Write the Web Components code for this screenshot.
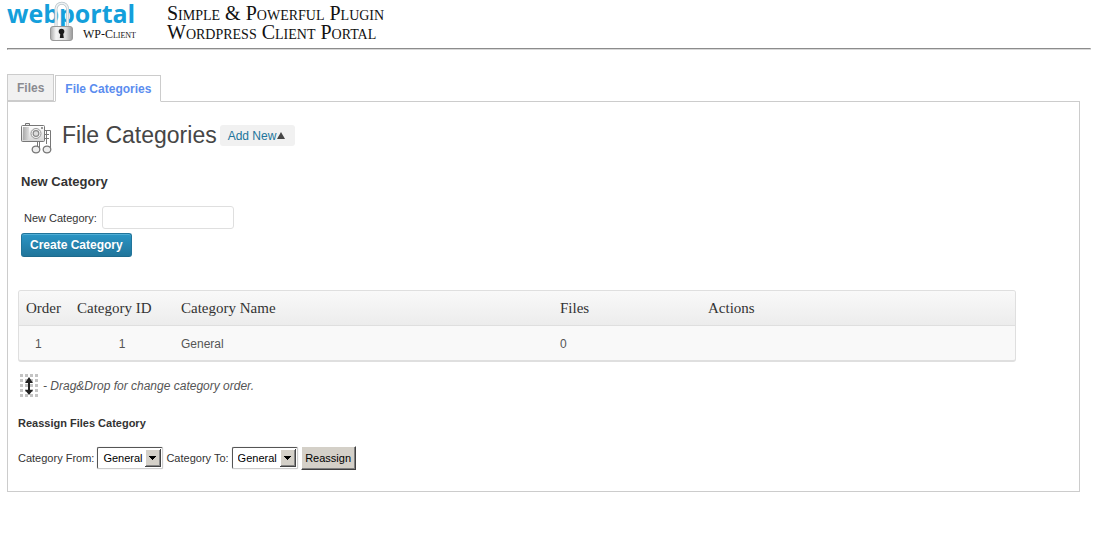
<!DOCTYPE html>
<html lang="en">
<head>
<meta charset="utf-8">
<title>File Categories</title>
<style>
  body { margin: 0; background: #fff; color: #333; font: 12px/18px "Liberation Sans", Arial, sans-serif; }
</style>
</head>
<body>
<portal-header></portal-header>
<portal-tabs></portal-tabs>
<portal-panel>
  <page-heading>File Categories</page-heading>
  <category-form></category-form>
  <category-table></category-table>
  <drag-hint>- Drag&amp;Drop for change category order.</drag-hint>
  <reassign-form></reassign-form>
</portal-panel>

<script>
const define = (name, html) => {
  const template = document.createElement('template');
  template.innerHTML = html;
  customElements.define(name, class extends HTMLElement {
    constructor() {
      super();
      this.attachShadow({ mode: 'open' }).append(template.content.cloneNode(true));
    }
  });
};

define('portal-header', `
<style>
  :host { display: block; padding: 0 3px 0 7px; font-family: "Liberation Serif", serif; color: #111; }
  .bar { display: flex; gap: 31px; height: 48px; box-sizing: border-box; }
  .logo { position: relative; flex: none; width: 129px; }
  .name { font: bold 25px/27px "Open Sans", sans-serif; color: #149fdb; }
  .sub { font-size: 12px; line-height: 14px; font-variant: small-caps; text-align: right; }
  svg { position: absolute; left: 42px; top: 1px; }
  .tag { padding-top: 4px; font-size: 20px; line-height: 19px; font-variant: small-caps; white-space: nowrap; }
  hr { margin: 0; border: 1px solid; border-color: #8c8c8c #d8d8d8 #d8d8d8 #8c8c8c; }
</style>
<div class="bar">
  <div class="logo">
    <div class="name">webportal</div>
    <div class="sub">WP-Client</div>
    <svg width="25" height="41" viewBox="0 0 25 41" aria-hidden="true">
      <defs><linearGradient id="m"><stop stop-color="#aaa"/><stop offset=".25" stop-color="#f4f4f4"/><stop offset=".7" stop-color="#ddd"/><stop offset="1" stop-color="#999"/></linearGradient></defs>
      <path d="M7 26V8a5.800 5.800 0 0 1 11.600 0v18" fill="none" stroke="#b9c4c9" stroke-width="3"/>
      <path d="M7 26V8a5.800 5.800 0 0 1 11.600 0v18" fill="none" stroke="#edf1f3" stroke-width="1.600"/>
      <rect x="1.500" y="25.500" width="22" height="14" rx="2.500" fill="url(#m)" stroke="#999"/>
      <circle cx="12.500" cy="30.500" r="2.800" fill="#1b1b1b"/><path d="M11.500 31h2.500l.8 6h-4z" fill="#1b1b1b"/>
    </svg>
  </div>
  <div class="tag">Simple &amp; Powerful Plugin<br>Wordpress Client Portal</div>
</div>
<hr>`);

define('portal-tabs', `
<style>
  :host { display: block; padding: 24px 14px 0 7px; }
  nav { display: flex; align-items: flex-end; gap: 1px; position: relative; margin-bottom: -1px; }
  a { box-sizing: border-box; height: 27px; padding: 0 9px; border: 1px solid #ccc; background: #f1f1f1; color: #8a8a90; font-weight: bold; line-height: 27px; text-decoration: none; margin-bottom: 1px; }
  a[aria-current] { background: #fff; border-bottom-color: #fff; color: #5b8def; margin-bottom: 0; }
</style>
<nav><a href="#files">Files</a><a href="#categories" aria-current="page">File Categories</a></nav>`);

define('portal-panel', `
<style>
  :host { display: block; margin: 0 14px 0 7px; border: 1px solid #ccc; padding: 15px 63px 21px 10px; }
</style>
<slot></slot>`);

define('page-heading', `
<style>
  :host { display: flex; align-items: center; gap: 3px; height: 36px; padding-left: 2px; }
  svg { flex: none; padding-top: 6px; margin-right: 6px; }
  h1 { margin: 0; font: 23px/36px "Liberation Sans", Arial, sans-serif; color: #464646; }
  a { display: flex; align-items: center; gap: 1px; padding: 1px 10px 0 8px; border-radius: 3px; background: #f1f1f1; color: #21759b; line-height: 20px; text-decoration: none; }
  i { border: 4px solid transparent; border-top: 0; border-bottom: 7px solid #464646; }
</style>
<svg width="33" height="32" viewBox="0 0 33 32" aria-hidden="true">
  <defs><linearGradient id="c" x2="0" y2="1"><stop stop-color="#fff"/><stop offset="1" stop-color="#d5d5d5"/></linearGradient><linearGradient id="g" x2="1" y2="0"><stop stop-color="#aaa"/><stop offset="1" stop-color="#ddd"/></linearGradient></defs>
  <path d="M5.500 3V1.500h4V3" fill="#eee" stroke="#777"/>
  <path d="M24 8.500h6.500V27M24 12.500h5M24 16.500h5M26.500 8.500V22" fill="none" stroke="#777"/>
  <rect x="1.500" y="3.500" width="23" height="16" rx="1" fill="url(#c)" stroke="#777"/>
  <rect x="3" y="5" width="6" height="13" fill="url(#g)"/>
  <circle cx="16" cy="11.500" r="5" fill="#f4f4f4" stroke="#999"/>
  <circle cx="16" cy="11.500" r="2.800" fill="#ddd" stroke="#888" stroke-width="1.200"/>
  <rect x="21" y="5" width="2" height="2" fill="#999"/>
  <path d="M19.500 20v7M17.500 20v4" stroke="#777" fill="none"/>
  <ellipse cx="16" cy="27.500" rx="3.800" ry="3.400" fill="#eee" stroke="#777" stroke-width="1.300"/>
  <ellipse cx="27" cy="27.500" rx="3.800" ry="3.400" fill="#eee" stroke="#777" stroke-width="1.300"/>
</svg>
<h1><slot></slot></h1>
<a href="#add">Add New<i></i></a>`);

define('category-form', `
<style>
  :host { display: block; padding: 19px 3px 33px; }
  h2 { margin: 0 0 14px; font-size: 13px; line-height: 20px; }
  div { display: flex; align-items: center; gap: 5px; padding-left: 3px; margin-bottom: 4px; font-size: 11px; }
  input { box-sizing: border-box; width: 132px; height: 23px; padding: 2px 4px; border: 1px solid #dfdfdf; border-radius: 3px; font: 12px "Liberation Sans", Arial, sans-serif; }
  button { display: block; height: 24px; padding: 0 8px; border: 1px solid #21759b; border-bottom-color: #1e6a8d; border-radius: 3px; background: linear-gradient(#2a95c5, #21759b); box-shadow: inset 0 1px 0 rgba(120,200,230,.5); color: #fff; font: bold 12px/22px "Liberation Sans", Arial, sans-serif; text-shadow: 0 1px 0 rgba(0,0,0,.1); }
</style>
<form>
  <h2>New Category</h2>
  <div><label for="name">New Category:</label><input id="name" type="text"></div>
  <button type="button">Create Category</button>
</form>`);

define('category-table', `
<style>
  :host { display: block; border: 1px solid #dfdfdf; border-bottom-width: 2px; border-radius: 3px; background: #f9f9f9; overflow: hidden; }
  table { width: 100%; border-collapse: separate; border-spacing: 0; table-layout: fixed; }
  th, td { box-sizing: border-box; height: 35px; padding: 0 7px; text-align: left; white-space: nowrap; }
  th { border-bottom: 1px solid #dfdfdf; font: 15px/18px "Liberation Serif", Georgia, serif; }
  thead { background: linear-gradient(#f9f9f9, #ececec); }
  td { height: 34px; padding-top: 2px; color: #555; }
  .order { width: 51px; } .id { width: 104px; } .name { width: 379px; } .files { width: 148px; }
  td.order { padding-left: 16px; } td.id { text-align: center; }
</style>
<table>
  <thead><tr><th class="order">Order</th><th class="id">Category ID</th><th class="name">Category Name</th><th class="files">Files</th><th>Actions</th></tr></thead>
  <tbody><tr><td class="order">1</td><td class="id">1</td><td>General</td><td>0</td><td></td></tr></tbody>
</table>`);

define('drag-hint', `
<style>
  :host { display: flex; align-items: center; gap: 4px; padding: 11px 0 0 1px; height: 25px; color: #555; font-style: italic; }
</style>
<svg width="20" height="25" viewBox="0 0 20 25" aria-hidden="true">
  <path d="M1 2.500h18M1 7.500h18M1 12.500h18M1 17.500h18M1 22.500h18" stroke="#c4c4c4" stroke-width="3" stroke-dasharray="3 2"/>
  <path d="M10 4l4 6H11v7h3L10 22 6 17h3v-7H6z" fill="#222"/>
</svg>
<span><slot></slot></span>`);

define('classic-select', `
<style>
  :host { display: inline-grid; width: 66px; height: 22px; }
  select, svg { grid-area: 1 / 1; }
  select { appearance: none; box-sizing: border-box; width: 100%; height: 100%; padding: 0 0 0 5px; border: 1px solid #555; border-right-color: #ccc; border-bottom-color: #ccc; border-radius: 2px; background: #fff; box-shadow: 0 0 1px #aaa; color: #000; font: 11px "Liberation Sans", Arial, sans-serif; }
  svg { justify-self: end; align-self: center; margin-right: 2px; pointer-events: none; }
</style>
<select><option>General</option></select>
<svg width="16" height="18" viewBox="0 0 16 18" aria-hidden="true"><path d="M0 0h16v18H0z" fill="#444"/><path d="M0 0h15v17H0z" fill="#fff"/><path d="M1 1h14v16H1z" fill="#888"/><path d="M1 1h13v15H1z" fill="#d4d0c8"/><path d="M4 7h7v1h-1v1H9v1H8v1H7v-1H6V9H5V8H4z" fill="#000"/></svg>`);

define('reassign-form', `
<style>
  :host { display: block; padding-top: 16px; font-size: 11px; }
  h3 { margin: 0 0 14px; font-size: 11px; line-height: 18px; }
  form > div { display: flex; align-items: center; gap: 3px; color: #333; }
  label { display: flex; align-items: center; gap: 3px; }
  button { box-sizing: border-box; width: 55px; height: 24px; padding: 0; border: 1px solid; border-color: #fff #404040 #404040 #fff; box-shadow: inset -1px -1px #808080; background: #d4d0c8; color: #000; font: 11px "Liberation Sans", Arial, sans-serif; }
</style>
<form>
  <h3>Reassign Files Category</h3>
  <div>
    <label>Category From: <classic-select></classic-select></label>
    <label>Category To: <classic-select></classic-select></label>
    <button type="button">Reassign</button>
  </div>
</form>`);

for (const form of document.querySelectorAll('reassign-form')) {
  form.shadowRoot.querySelectorAll('label').forEach(label => {
    label.querySelector('classic-select').shadowRoot.querySelector('select').setAttribute('aria-label', label.textContent.trim());
  });
}
</script>
</body>
</html>
